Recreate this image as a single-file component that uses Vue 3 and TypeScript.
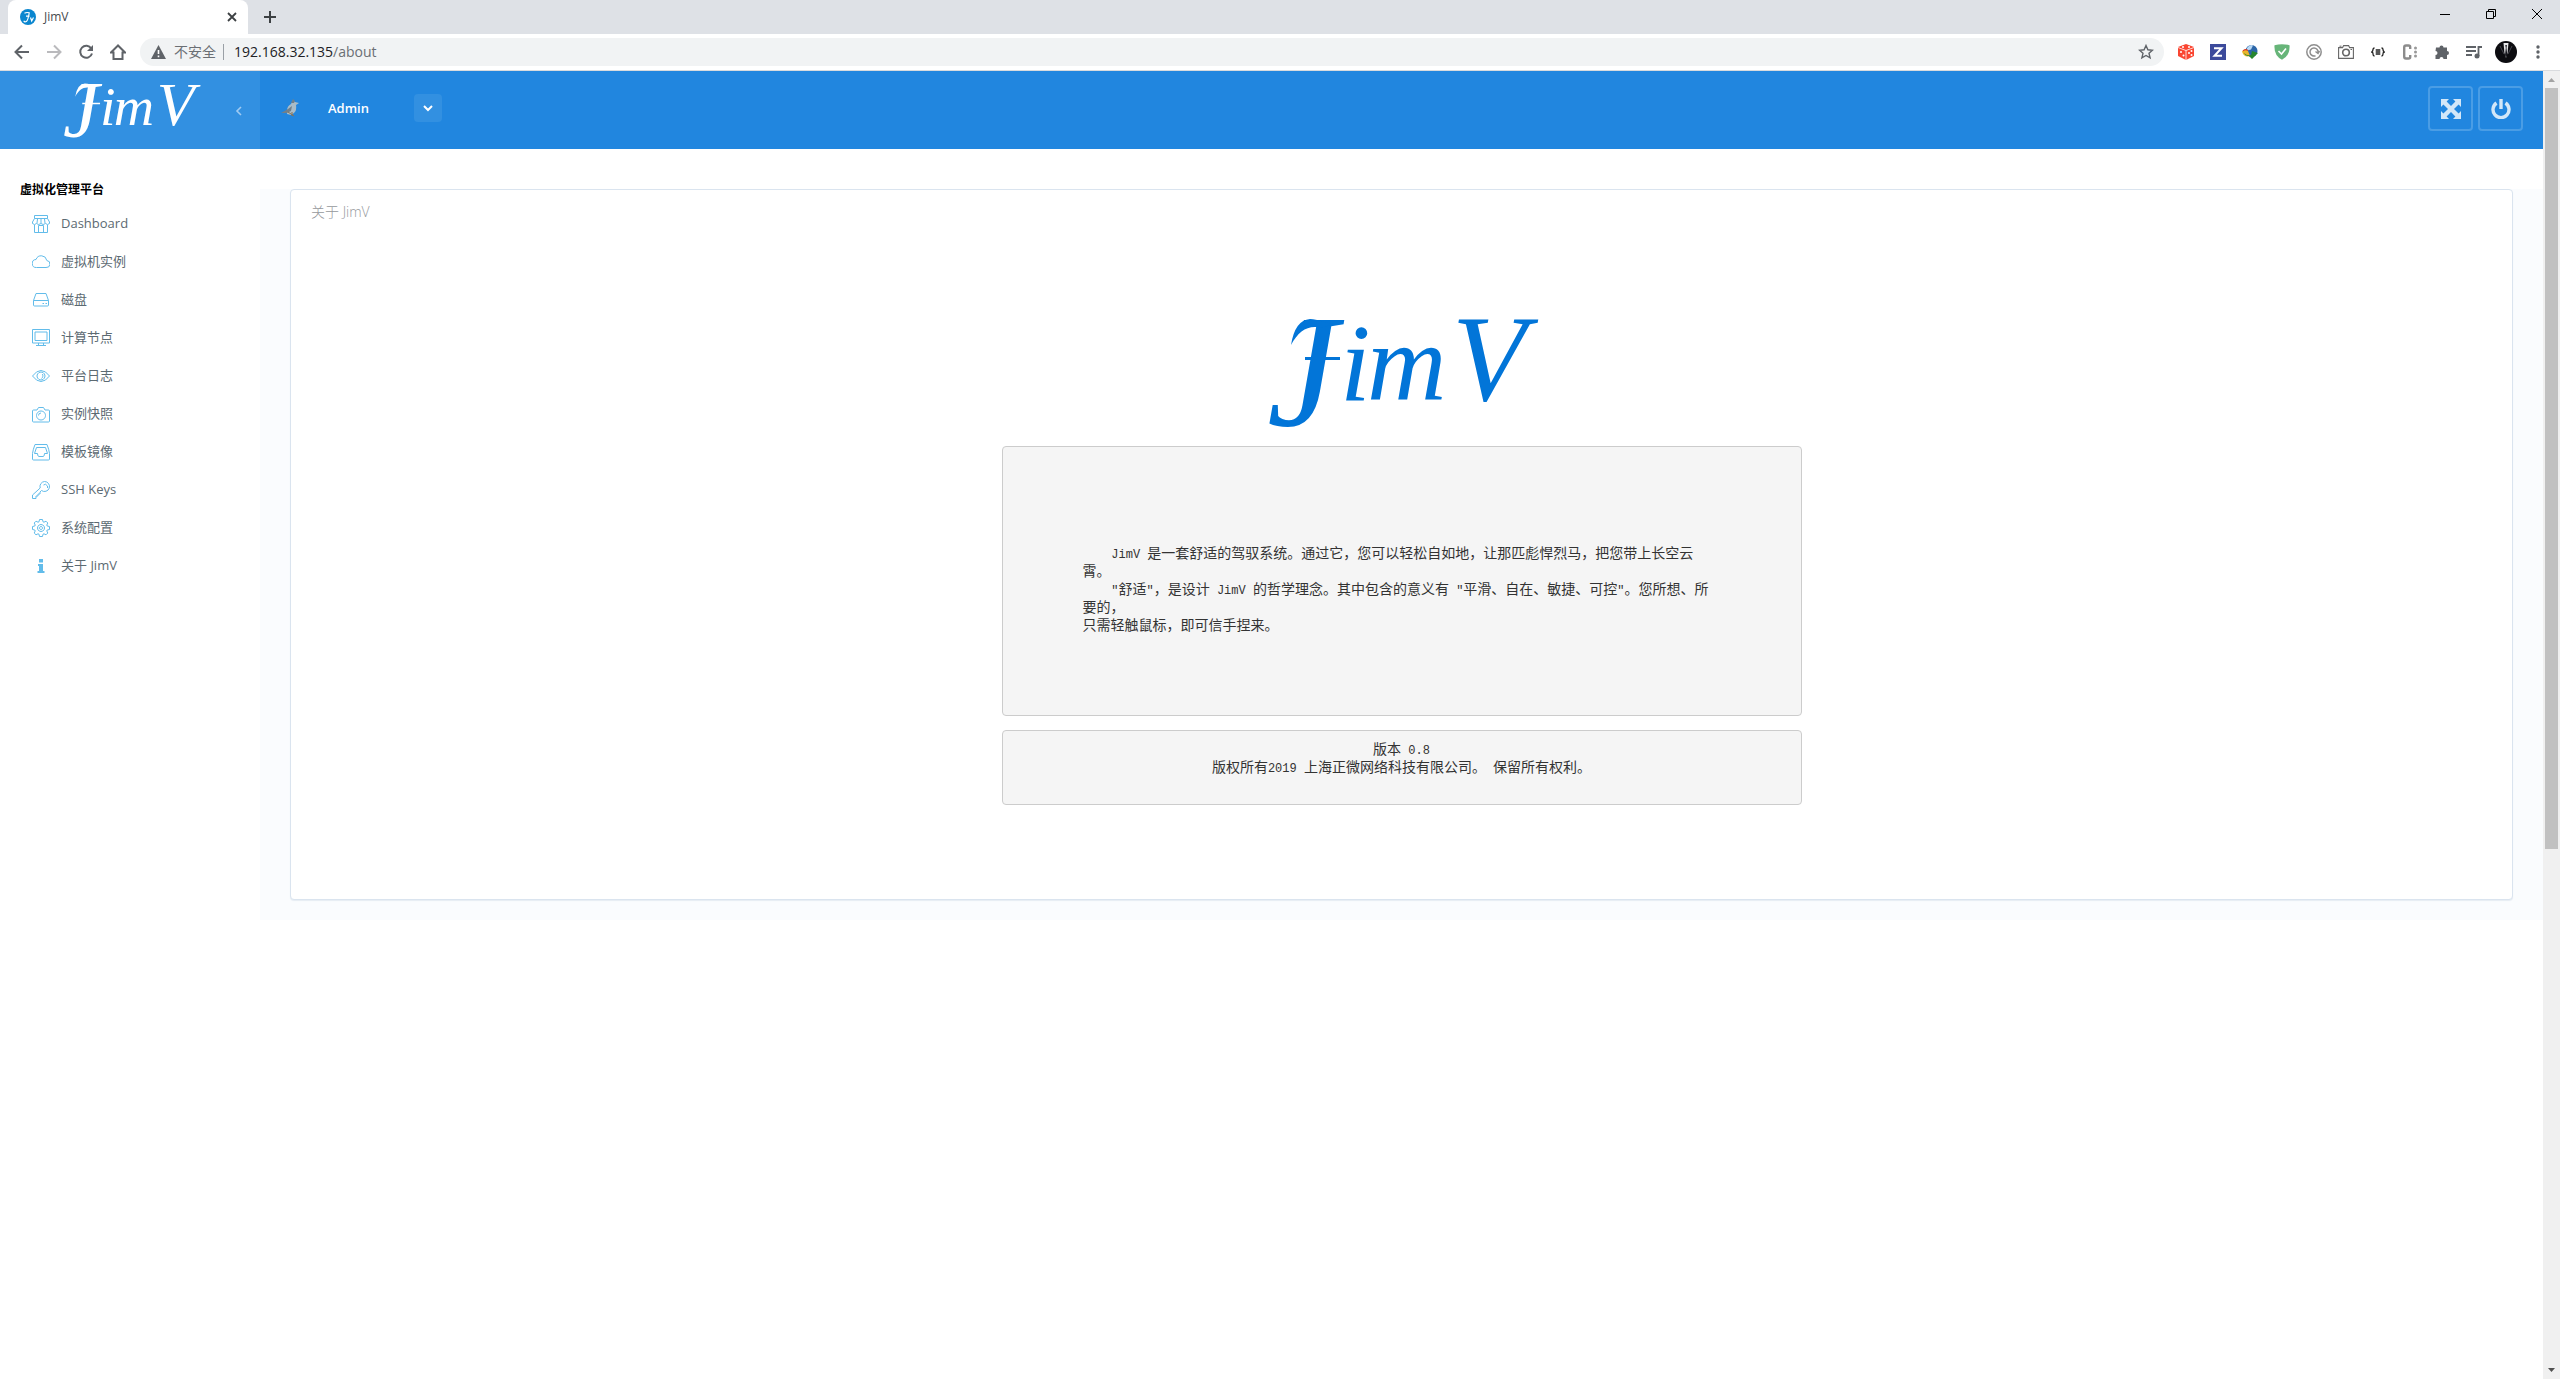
<script setup lang="ts">
import { ref } from 'vue'

interface NavItem {
  label: string
  icon: string
}

const navItems: NavItem[] = [
  { label: 'Dashboard', icon: 'store' },
  { label: '虚拟机实例', icon: 'cloud' },
  { label: '磁盘', icon: 'disk' },
  { label: '计算节点', icon: 'monitor' },
  { label: '平台日志', icon: 'eye' },
  { label: '实例快照', icon: 'camera' },
  { label: '模板镜像', icon: 'inbox' },
  { label: 'SSH Keys', icon: 'key' },
  { label: '系统配置', icon: 'gear' },
  { label: '关于 JimV', icon: 'info' },
]

const address = ref('192.168.32.135')
</script>

<template>
  <div class="browser">
    <div class="tabstrip">
      <div class="tab">
        <svg class="favicon" viewBox="0 0 16 16">
          <circle cx="8" cy="8" r="8" fill="#0a86cf" />
          <path d="M4.500 4.200q2-1.200 5-.4M9.300 3.500Q8 11.500 6.300 12.500T3.800 11.800M6 7.200h3.500M10.500 8.500l1.200 3.500 1.800-3.500" fill="none" stroke="#fff" stroke-width="1.200" />
        </svg>
        <span class="tab-title">JimV</span>
        <button class="plain" aria-label="关闭标签页">
          <svg width="10" height="10" viewBox="0 0 10 10"><path d="M1 1l8 8M9 1l-8 8" stroke="#3c4043" stroke-width="1.800" /></svg>
        </button>
      </div>
      <button class="plain new-tab" aria-label="新标签页">
        <svg width="12" height="12" viewBox="0 0 12 12"><path d="M6 0v12M0 6h12" stroke="#3c4043" stroke-width="2" /></svg>
      </button>
      <div class="window-controls">
        <button class="plain" aria-label="最小化"><svg width="10" height="10" viewBox="0 0 10 10"><path d="M0 5.500h10" stroke="#000" /></svg></button>
        <button class="plain" aria-label="还原"><svg width="10" height="10" viewBox="0 0 10 10"><path d="M.5 2.500h7v7h-7zM2.500 2.500v-2h7v7h-2" fill="none" stroke="#000" /></svg></button>
        <button class="plain" aria-label="关闭"><svg width="10" height="10" viewBox="0 0 10 10"><path d="M0 0l10 10M10 0L0 10" stroke="#000" /></svg></button>
      </div>
    </div>

    <div class="toolbar">
      <button class="plain cell" aria-label="后退"><svg width="16" height="16" viewBox="0 0 16 16"><path d="M15 8H2M8 1.500L1.500 8 8 14.500" fill="none" stroke="#5f6368" stroke-width="2" /></svg></button>
      <button class="plain cell" aria-label="前进"><svg width="16" height="16" viewBox="0 0 16 16"><path d="M1 8h13M8 1.500L14.500 8 8 14.500" fill="none" stroke="#bababd" stroke-width="2" /></svg></button>
      <button class="plain cell" aria-label="刷新"><svg width="16" height="16" viewBox="0 0 16 16"><path d="M13.300 4.500A6 6 0 1 0 14 9.500" fill="none" stroke="#5f6368" stroke-width="2" /><path d="M15 1v6H9z" fill="#5f6368" /></svg></button>
      <button class="plain cell" aria-label="主页"><svg width="16" height="16" viewBox="0 0 16 16"><path d="M8 1.500L1 8.500h2.500V15h9V8.500H15z" fill="none" stroke="#5f6368" stroke-width="2" /></svg></button>
      <div class="omnibox">
        <svg class="warn" width="15" height="14" viewBox="0 0 15 14"><path d="M7.500 0L15 14H0z" fill="#5f6368" /><path d="M7.500 5v4M7.500 10.500v1.700" stroke="#fff" stroke-width="1.600" /></svg>
        <span class="insecure">不安全</span>
        <span class="bar"></span>
        <span class="url">{{ address }}<span class="url-path">/about</span></span>
        <button class="plain star" aria-label="收藏">
          <svg width="16" height="16" viewBox="0 0 16 16"><path d="M8 1.500l1.900 4.300 4.600.4-3.500 3.100 1.100 4.600L8 11.500l-4.100 2.400L5 9.300 1.500 6.200l4.600-.4z" fill="none" stroke="#5f6368" stroke-width="1.400" /></svg>
        </button>
      </div>
      <div class="extensions">
        <button class="plain cell" aria-label="骰子"><svg width="16" height="16" viewBox="0 0 16 16"><path d="M8 0l8 3v9l-8 4-8-4V3z" fill="#fa4632" /><path d="M0 3.500l8 3 8-3M8 6.500V16" fill="none" stroke="#fff" stroke-width=".8" /><g fill="#fff"><circle cx="5" cy="3" r="1" /><circle cx="11" cy="3" r="1" /><circle cx="3" cy="8" r="1" /><circle cx="5.500" cy="11.500" r="1" /><circle cx="11" cy="9" r="1" /><circle cx="13.500" cy="11" r="1" /><circle cx="13.500" cy="7" r="1" /></g></svg></button>
        <button class="plain cell" aria-label="Z"><svg width="16" height="16" viewBox="0 0 16 16"><path d="M0 0h16v16H0z" fill="#3c4a9b" /><path d="M4 4.200h7.500L4.500 11.800H12" fill="none" stroke="#fff" stroke-width="2" /></svg></button>
        <button class="plain cell" aria-label="下载器"><svg width="16" height="16" viewBox="0 0 16 16"><circle cx="9.500" cy="7" r="6" fill="#2c66a8" /><path d="M5 4q3-4 6-2.500l-2 4-4 1z" fill="#b9d9f5" /><path d="M0 7.500q3-3.500 6-.5l2 5q-6 2-8-4.500z" fill="#e9b52b" /><path d="M2 9q3 3 7 2l1-4 3 1 3 1-6 6-3-3q-4 0-5-3z" fill="#27862d" /><path d="M1 7q2-2.500 5-.5" stroke="#d93a26" fill="none" stroke-width="1.200" /></svg></button>
        <button class="plain cell" aria-label="广告拦截"><svg width="16" height="16" viewBox="0 0 16 16"><path d="M.5 1.200Q8-.8 15.500 1.200q.8 10-7.500 14.600Q-.3 11.200.5 1.200z" fill="#67b579" /><path d="M4.500 7l3 3 4.500-5.500" fill="none" stroke="#fff" stroke-width="1.600" /></svg></button>
        <button class="plain cell" aria-label="同步"><svg width="16" height="16" viewBox="0 0 16 16"><circle cx="8" cy="8" r="7.200" fill="none" stroke="#8e8e8e" stroke-width="1.500" /><path d="M9.500 11.700A4 4 0 1 1 12 8.500M9.500 7.500l2.500 2 1.500-2.500" fill="none" stroke="#8e8e8e" stroke-width="1.500" /></svg></button>
        <button class="plain cell" aria-label="截图"><svg width="16" height="14" viewBox="0 0 16 14"><path d="M.6 2.600h4l1-2h5l1 2h3.800v10.800H.6z" fill="none" stroke="#666" stroke-width="1.100" /><circle cx="8" cy="7.500" r="3.300" fill="none" stroke="#666" stroke-width="1.600" /><path d="M1.500 1.200h2M12.500 4.500h1.500" stroke="#666" /></svg></button>
        <button class="plain cell" aria-label="JSON"><svg width="14" height="10" viewBox="0 0 14 10"><path d="M3.500 1Q2 1 2 2.500T.8 5Q2 5 2 7t1.500 2M10.500 1Q12 1 12 2.500T13.200 5Q12 5 12 7t-1.500 2M4.700 3h4.600M4.700 5h4.600M4.700 7h4.600" fill="none" stroke="#222" stroke-width="1.300" /></svg></button>
        <button class="plain cell" aria-label="C"><svg width="16" height="16" viewBox="0 0 16 16"><path d="M8.200 5V3Q8.200 1.500 6.500 1.500H4Q2.200 1.500 2.200 3.500v9Q2.200 14.500 4 14.500h2.500Q8.200 14.500 8.200 13v-2" fill="none" stroke="#8c8c8c" stroke-width="2.400" /><g fill="#999"><circle cx="13.500" cy="4" r="1.500" /><circle cx="13.500" cy="8" r="1.500" /><circle cx="13.500" cy="12" r="1.500" /></g></svg></button>
        <button class="plain cell" aria-label="扩展程序"><svg width="16" height="16" viewBox="0 0 16 16"><path d="M2 3.500h3.500a2 2 0 1 1 4 0H13V7a2 2 0 1 1 0 4v4H9.500a2 2 0 0 0-4 0H1.500v-4a2 2 0 0 0 0-4z" fill="#5f6368" /></svg></button>
        <button class="plain cell" aria-label="媒体"><svg width="16" height="16" viewBox="0 0 16 16"><path d="M0 3h10M0 7h10M0 11h6M12.500 12V3H16" fill="none" stroke="#5f6368" stroke-width="1.800" /><circle cx="11" cy="12" r="2.500" fill="#5f6368" /></svg></button>
        <button class="plain cell" aria-label="用户"><svg width="22" height="22" viewBox="0 0 22 22"><circle cx="11" cy="11" r="11" fill="#0c0c10" /><path d="M8.500 2h5L12.500 12 11 17 9.500 12z" fill="#e8e8ea" /><path d="M10.300 4h1.600l-.4 3 .8 7L11 17l-1-3 .8-7z" fill="#17171d" /><path d="M5 5l4 8M17 5l-4 8" stroke="#44444d" /></svg></button>
        <button class="plain cell" aria-label="菜单"><svg width="4" height="14" viewBox="0 0 4 14"><g fill="#5f6368"><circle cx="2" cy="2" r="1.700" /><circle cx="2" cy="7" r="1.700" /><circle cx="2" cy="12" r="1.700" /></g></svg></button>
      </div>
    </div>

    <div class="viewport">
      <div class="page">
        <header class="header">
          <div class="brand">
            <a class="brand-link" href="#" aria-label="JimV">
              <svg class="logo small-logo" viewBox="0 0 270 114">
                <text><tspan class="lj" x="0" y="109">J</tspan><tspan class="lm" x="73" y="84">i</tspan><tspan class="lm" x="100" y="84">m</tspan><tspan class="lv" x="185" y="84">V</tspan></text>
                <path class="swash" d="M24 29Q28 4 43 3C52 3 58 8 66 7Q60 12 50 11C39 10 31 16 24 29zM38 41h35v3H38z" />
              </svg>
            </a>
            <button class="plain collapse" aria-label="收起菜单"><svg width="7" height="10" viewBox="0 0 7 10"><path d="M6 1L2 5l4 4" fill="none" stroke="#a0cbf2" stroke-width="1.600" /></svg></button>
          </div>
          <div class="user">
            <svg class="avatar" width="20" height="20" viewBox="0 0 20 20"><path d="M7 13q0-5 4-7l2-4 2 2 4 1-3 2q1 5-2 8l-3 2-4-1z" fill="#a9bcc8" /><path d="M11 5l2-4 2 2-1 2zM1 15l7-4 4-3-1 5-4 2z" fill="#70808b" /><path d="M8 14l6 4M12 14v4" fill="none" stroke="#8a7355" /></svg>
            <span class="user-name">Admin</span>
            <button class="dropdown" aria-label="用户菜单"><svg width="10" height="7" viewBox="0 0 10 7"><path d="M1 1l4 4 4-4" fill="none" stroke="#fff" stroke-width="2" /></svg></button>
          </div>
          <div class="actions">
            <button class="action" aria-label="全屏"><svg width="20" height="20" viewBox="0 0 20 20"><path d="M0 0h8L5.600 2.400 10 7l4.400-4.600L12 0h8v8l-2.400-2.400L13 10l4.600 4.400L20 12v8h-8l2.400-2.400L10 13l-4.400 4.600L8 20H0v-8l2.400 2.400L7 10 2.400 5.600 0 8z" fill="#d3e7f8" /></svg></button>
            <button class="action" aria-label="退出"><svg width="20" height="20" viewBox="0 0 20 20"><path d="M5.500 4A8 8 0 1 0 14.500 4M10 0v10" fill="none" stroke="#d3e7f8" stroke-width="3.400" /></svg></button>
          </div>
        </header>

        <div class="body">
          <nav class="sidebar">
            <h2 class="nav-title">虚拟化管理平台</h2>
            <ul class="nav-list">
              <li v-for="item in navItems" :key="item.label">
                <a class="nav-link" href="#">
                  <svg class="nav-icon" viewBox="0 0 18 18">
                    <path v-if="item.icon === 'store'" d="M2.500.5h13v3h-13zM2.500 3.500L.5 7v1.500q2 2 4 0 2 2 4.500 0 2 2 4.500 0 2 2 4 0V7l-2-3.500M2.500 10v7.500h13V10M5.500 4L5 8M9 4v4M12.500 4l.5 4M6.500 17.500v-7h5v7" />
                    <path v-else-if="item.icon === 'cloud'" d="M4.500 14.500h9.500a3.500 3.500 0 0 0 .8-7A5.600 5.600 0 0 0 4 6.500a4 4 0 0 0 .5 8z" />
                    <path v-else-if="item.icon === 'disk'" d="M4 2.500h10l2.500 7v4.500q0 1-1 1h-13q-1 0-1-1V9.500zM1.500 9.500h15M10.500 12.500h1.500M13.500 12.500H15" />
                    <path v-else-if="item.icon === 'monitor'" d="M.5.500h17v13.500H.5zM3 3h12v8.500H3zM6.500 14v2M11.500 14v2M4 16.500h10" />
                    <path v-else-if="item.icon === 'eye'" d="M.5 9Q4.500 3.500 9 3.500T17.500 9Q13.500 14.500 9 14.500T.5 9zM9 5a4 4 0 1 0 .01 0zM10.500 7a2 3 0 0 1-1 4.500" />
                    <path v-else-if="item.icon === 'camera'" d="M1.500 5h3.500l1.500-2.500h5L13 5h3.500q1 0 1 1v10q0 1-1 1h-15q-1 0-1-1V6q0-1 1-1zM9 6a4.500 4.500 0 1 0 .01 0zM9 8a2.500 2.500 0 0 0-2.500 2.500" />
                    <path v-else-if="item.icon === 'inbox'" d="M3 1.500h12q2 5 2.500 9v5.500q0 1-1 1h-15q-1 0-1-1v-5.500Q1 6.500 3 1.500zM4.500 4.500h9l2 6h-3q0 3-1.500 3H7q-1.500 0-1.500-3h-3z" />
                    <path v-else-if="item.icon === 'key'" d="M12.500.5a5 5 0 1 1-3 9L8 11v2H6v2H4v2.500H.5V14L8.200 7A5 5 0 0 1 12.500.5zM11.500 4q2-2 4 1v2" />
                    <path v-else-if="item.icon === 'gear'" d="M7.500.5H10.500L11 2.800 12 3.200 14 2.200 15.800 4 14.800 6 15.200 7 17.500 7.500V10.500L15.200 11 14.800 12 15.800 14 14 15.800 12 14.800 11 15.200 10.500 17.500H7.500L7 15.200 6 14.800 4 15.800 2.200 14 3.200 12 2.800 11 .5 10.500V7.500L2.800 7 3.200 6 2.200 4 4 2.200 6 3.200 7 2.800zM9 5.500a3.500 3.500 0 1 0 .01 0zM9 7.500a1.500 1.500 0 1 0 .01 0z" />
                    <path v-else class="solid" d="M7 2h4v3.500H7zM6 7h5v7h1.500v2h-7v-2H7V9H6z" />
                  </svg>
                  <span>{{ item.label }}</span>
                </a>
              </li>
            </ul>
          </nav>

          <main class="main">
            <section class="panel">
              <h1 class="panel-title">关于 JimV</h1>
              <div class="about">
                <svg class="logo big-logo" viewBox="0 0 270 114" role="img" aria-label="JimV">
                  <text><tspan class="lj" x="0" y="109">J</tspan><tspan class="lm" x="73" y="84">i</tspan><tspan class="lm" x="100" y="84">m</tspan><tspan class="lv" x="185" y="84">V</tspan></text>
                  <path class="swash" d="M24 29Q28 4 43 3C52 3 58 8 66 7Q60 12 50 11C39 10 31 16 24 29zM38 41h35v3H38z" />
                </svg>
                <pre class="card intro"><span>    JimV </span>是一套舒适的驾驭系统。通过它，您可以轻松自如地，让那匹彪悍烈马，把您带上长空云
霄。
<span>    "</span>舒适<span>"</span>，是设计<span> JimV </span>的哲学理念。其中包含的意义有<span> "</span>平滑、自在、敏捷、可控<span>"</span>。您所想、所
要的，
只需轻触鼠标，即可信手捏来。</pre>
                <pre class="card version">版本<span> 0.8</span>
版权所有<span>2019 </span>上海正微网络科技有限公司。<span> </span>保留所有权利。</pre>
              </div>
            </section>
          </main>
        </div>
      </div>

      <div class="scrollbar" aria-hidden="true">
        <svg class="arrow" viewBox="0 0 17 17"><path d="M5 11h7L8.500 7z" fill="#a3a3a3" /></svg>
        <div class="track"><div class="thumb"></div></div>
        <svg class="arrow" viewBox="0 0 17 17"><path d="M5 6h7l-3.500 4z" fill="#505050" /></svg>
      </div>
    </div>
  </div>
</template>

<style>
body {
  background: #fff;
}
</style>

<style scoped>
.browser {
  display: flex;
  flex-direction: column;
  min-height: 100vh;
  font-family: "Open Sans", "Noto Sans CJK SC", sans-serif;
  font-size: 13px;
  line-height: 20px;
}
* {
  box-sizing: border-box;
}
.plain {
  display: flex;
  align-items: center;
  justify-content: center;
  padding: 0;
  border: 0;
  background: none;
}
.tabstrip {
  display: flex;
  height: 34px;
  padding-left: 8px;
  background: #dee1e6;
}
.tab {
  display: flex;
  align-items: center;
  width: 240px;
  padding: 0 11px 0 12px;
  border-radius: 8px 8px 0 0;
  background: #fff;
}
.favicon {
  width: 16px;
  height: 16px;
}
.tab-title {
  flex: 1;
  margin-left: 8px;
  color: #45494d;
  font-size: 12px;
}
.new-tab {
  width: 28px;
  margin-left: 8px;
}
.window-controls {
  display: flex;
  height: 28px;
  margin-left: auto;
}
.window-controls .plain {
  width: 46px;
}
.toolbar {
  display: flex;
  align-items: center;
  height: 37px;
  padding: 0 6px;
  border-bottom: 1px solid #d9dbde;
  background: #fff;
}
.cell {
  width: 32px;
  height: 28px;
}
.omnibox {
  display: flex;
  flex: 1;
  align-items: center;
  height: 28px;
  margin: 0 6px;
  padding: 0 10px 0 11px;
  border-radius: 14px;
  background: #f1f3f4;
  color: #6b6f74;
  font-size: 14px;
}
.insecure {
  margin-left: 8px;
}
.bar {
  width: 1px;
  height: 16px;
  margin: 0 10px 0 7px;
  background: #9aa0a6;
}
.url {
  color: #202124;
}
.url-path {
  color: #6b6f74;
}
.star {
  margin-left: auto;
}
.extensions {
  display: flex;
}
.viewport {
  display: flex;
  flex: 1;
}
.page {
  flex: 1;
  min-width: 0;
}
.header {
  display: flex;
  align-items: center;
  height: 78px;
  padding-right: 20px;
  background: #2186df;
}
.brand {
  display: flex;
  align-items: center;
  justify-content: space-between;
  width: 260px;
  height: 78px;
  padding: 2px 18px 0 63px;
  background: #3290e1;
}
.brand-link {
  display: flex;
}
.logo {
  overflow: visible;
}
.logo text,
.swash {
  fill: currentColor;
}
.logo text {
  font-family: "Liberation Serif", serif;
  font-style: italic;
}
.lj {
  font-size: 160px;
}
.lm {
  font-size: 110px;
}
.lv {
  font-size: 122px;
}
.small-logo {
  width: 137px;
  color: #fff;
}
.user {
  display: flex;
  align-items: center;
  padding: 0 0 4px 20px;
}
.user-name {
  width: 86px;
  margin-left: 28px;
  color: #fff;
  font-weight: 600;
}
.dropdown {
  display: flex;
  align-items: center;
  justify-content: center;
  width: 28px;
  height: 28px;
  padding: 0;
  border: 0;
  border-radius: 4px;
  background: #3290e1;
}
.actions {
  display: flex;
  gap: 5px;
  margin-left: auto;
  padding-bottom: 3px;
}
.action {
  display: flex;
  align-items: center;
  justify-content: center;
  width: 45px;
  height: 45px;
  padding: 0;
  border: 2px solid #4a9de5;
  border-radius: 4px;
  background: none;
}
.body {
  display: flex;
}
.sidebar {
  width: 260px;
  padding: 31px 0 0 20px;
}
.nav-title {
  margin: 0 0 4px;
  color: #000;
  font-size: 12px;
  line-height: 20px;
}
.nav-list {
  margin: 0;
  padding: 0;
  list-style: none;
}
.nav-link {
  display: flex;
  align-items: center;
  gap: 11px;
  height: 38px;
  padding-left: 12px;
  color: #5c6a72;
  text-decoration: none;
}
.nav-icon {
  width: 18px;
  height: 18px;
  margin-top: 2px;
  fill: none;
  stroke: #62bcea;
}
.solid {
  fill: #62bcea;
  stroke: none;
}
.main {
  flex: 1;
  min-width: 0;
  margin-top: 40px;
  padding: 0 30px 20px;
  background: #fafcfe;
}
.panel {
  padding: 12px 20px 94px;
  border: 1px solid #dae4ef;
  border-radius: 4px;
  background: #fff;
  box-shadow: 0 1px 1px #e6edf3;
}
.panel-title {
  margin: 0;
  color: #95989c;
  font-size: 14px;
  font-weight: 300;
  line-height: 20px;
}
.about {
  display: flex;
  flex-direction: column;
  align-items: center;
}
.big-logo {
  width: 270px;
  margin: 94px 0 16px;
  color: #0275d8;
}
.card {
  width: 800px;
  margin: 0;
  border: 1px solid #ccc;
  border-radius: 4px;
  background: #f5f5f5;
  color: #333;
  font-family: "Liberation Mono", "Noto Sans CJK SC", monospace;
  font-size: 14px;
  line-height: 18px;
}
.card span {
  font-size: 12px;
  line-height: 12px;
}
.intro {
  padding: 98px 80px 80px;
}
.version {
  margin-top: 14px;
  padding: 10px 0 27px;
  text-align: center;
}
.scrollbar {
  display: flex;
  flex-direction: column;
  width: 17px;
  background: #f0f0f0;
}
.arrow {
  width: 17px;
  height: 17px;
}
.track {
  flex: 1;
  display: flex;
  flex-direction: column;
  padding: 0 2px;
}
.track::after {
  flex: 403;
  content: "";
}
.thumb {
  flex: 597;
  background: #c1c1c1;
}
</style>
